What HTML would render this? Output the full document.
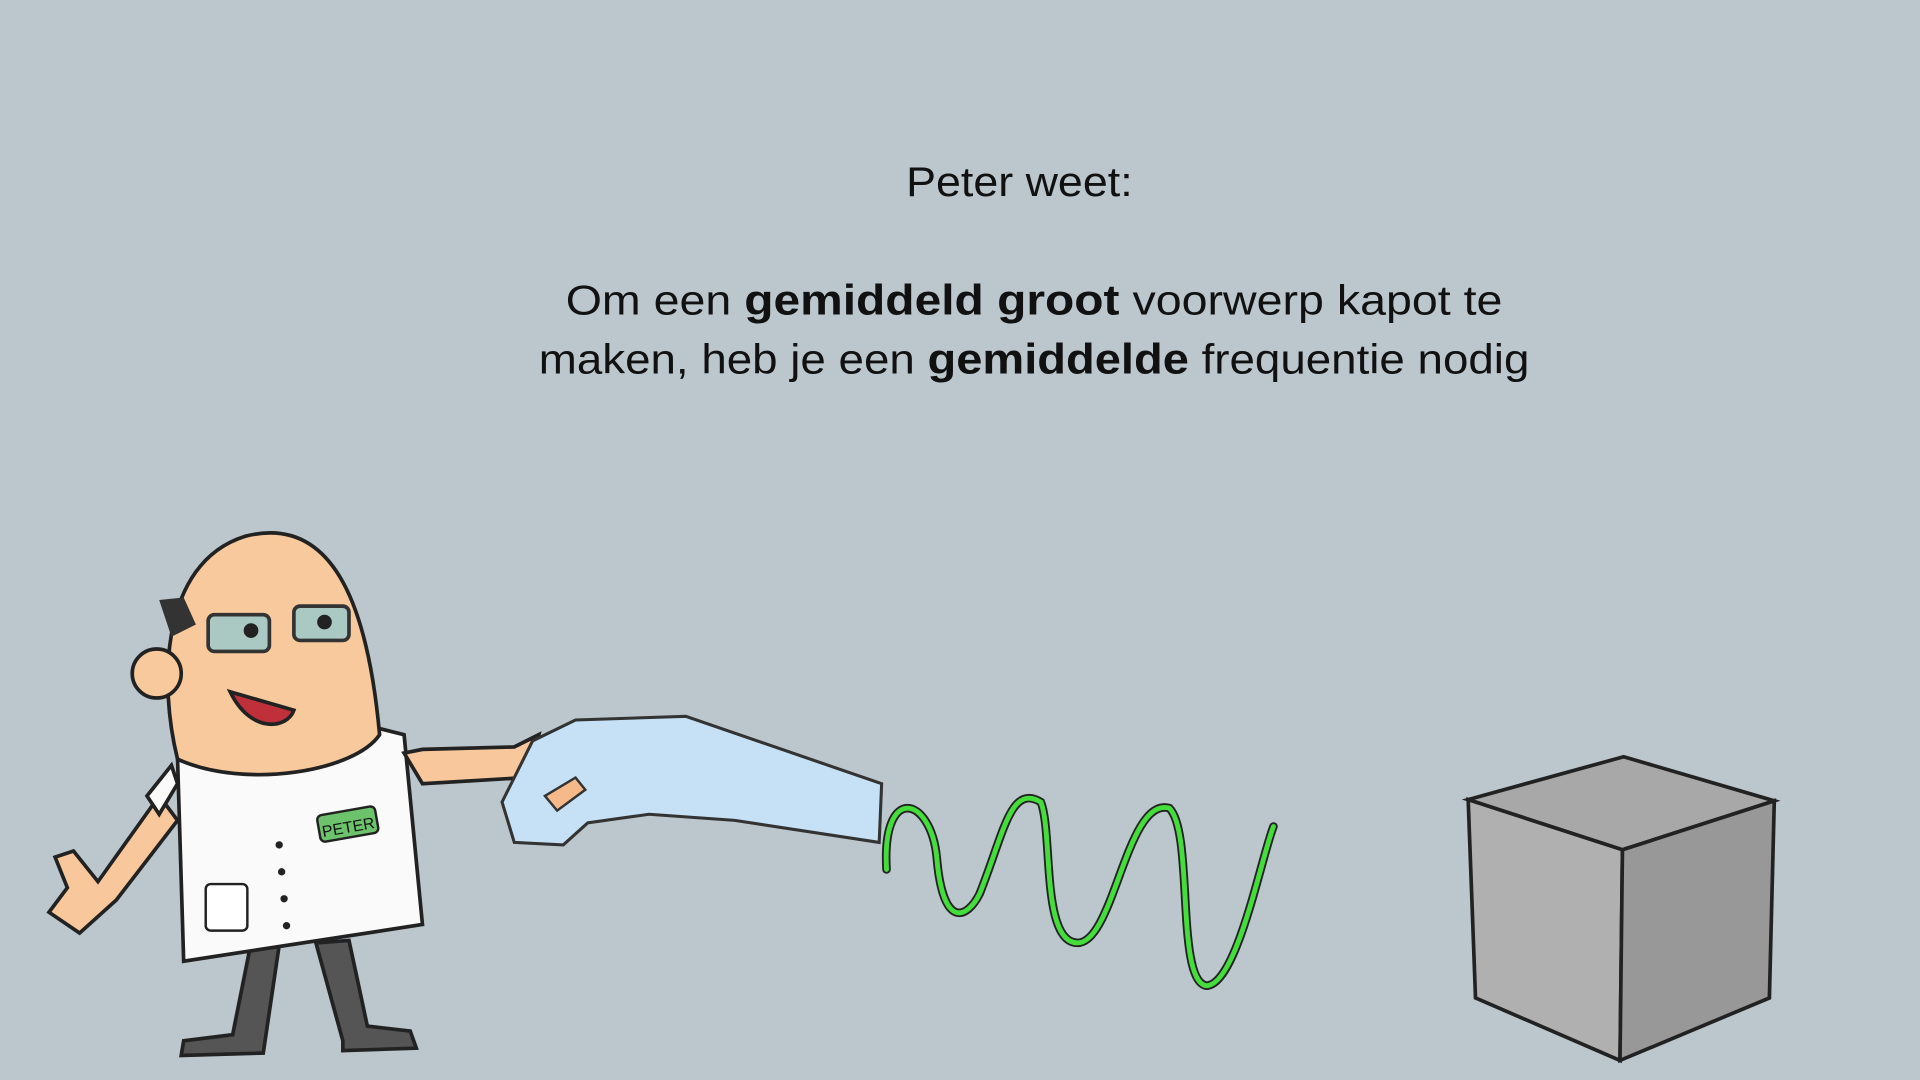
<!DOCTYPE html>
<html><head><meta charset="utf-8"><style>
html,body{margin:0;padding:0;background:#bbc6cd;width:1920px;height:1080px;overflow:hidden}
svg{display:block}
</style></head><body>
<svg width="1920" height="1080" viewBox="0 0 1568 882" xmlns="http://www.w3.org/2000/svg">
<rect width="1568" height="882" fill="#bbc6cd"/>
<g font-family="Liberation Sans, sans-serif" fill="#111" font-size="34">
<text x="740" y="160" textLength="185" lengthAdjust="spacingAndGlyphs">Peter weet:</text>
<text x="462" y="257" textLength="765" lengthAdjust="spacingAndGlyphs">Om een <tspan font-weight="bold" font-size="35">gemiddeld groot</tspan> voorwerp kapot te</text>
<text x="440" y="305" textLength="809" lengthAdjust="spacingAndGlyphs">maken, heb je een <tspan font-weight="bold" font-size="35">gemiddelde</tspan> frequentie nodig</text>
</g>
<!-- legs -->
<path d="M205 770 L190 845 L150 850 L148 862 L215 860 L228 772 Z" fill="#555" stroke="#222" stroke-width="3"/>
<path d="M258 770 L280 850 L280 858 L340 856 L335 842 L300 838 L285 768 Z" fill="#555" stroke="#222" stroke-width="3"/>
<!-- left arm -->
<path d="M130 650 L80 720 L60 695 L45 700 L55 725 L40 745 L65 762 L95 735 L145 670 Z" fill="#f8c79b" stroke="#222" stroke-width="3"/>
<!-- coat -->
<path d="M145 620 L150 785 L345 755 L330 600 L290 590 L200 600 Z" fill="#fafafa" stroke="#222" stroke-width="3"/>
<path d="M120 650 L130 665 L145 640 L140 625 Z" fill="#fafafa" stroke="#222" stroke-width="3"/>
<!-- right arm -->
<path d="M330 615 L345 640 L430 635 L440 600 L420 610 L345 612 Z" fill="#f8c79b" stroke="#222" stroke-width="3"/>
<rect x="260" y="662" width="48" height="22" rx="4" fill="#6cc36c" stroke="#222" stroke-width="2" transform="rotate(-10 284 673)"/>
<text x="284" y="680" font-size="13" font-family="Liberation Sans, sans-serif" text-anchor="middle" transform="rotate(-10 284 673)" fill="#111">PETER</text>
<rect x="168" y="722" width="34" height="38" rx="4" fill="#fff" stroke="#222" stroke-width="2"/>
<g fill="#222"><circle cx="228" cy="690" r="3"/><circle cx="230" cy="712" r="3"/><circle cx="232" cy="734" r="3"/><circle cx="234" cy="756" r="3"/></g>
<!-- head -->
<path d="M145 620 C130 560 130 460 200 438 C270 420 300 490 310 600 C290 630 200 645 145 620 Z" fill="#f8c99c" stroke="#222" stroke-width="3"/>
<ellipse cx="128" cy="550" rx="20" ry="20" fill="#f8c99c" stroke="#222" stroke-width="3"/>
<path d="M130 490 L140 520 L160 510 L150 488 Z" fill="#333"/>
<rect x="170" y="502" width="50" height="30" rx="5" fill="#a9c9c2" stroke="#333" stroke-width="3"/>
<rect x="240" y="495" width="45" height="28" rx="5" fill="#a9c9c2" stroke="#333" stroke-width="3"/>
<circle cx="205" cy="515" r="6" fill="#222"/><circle cx="265" cy="508" r="6" fill="#222"/>
<path d="M188 565 C205 600 235 595 240 580 Z" fill="#c0303a" stroke="#222" stroke-width="3"/>
<!-- gun -->
<path d="M410 655 L435 605 L470 588 L560 585 L720 640 L718 688 L600 670 L530 665 L480 672 L460 690 L420 688 Z" fill="#c6e1f5" stroke="#333" stroke-width="2.5"/>
<path d="M445 650 L470 635 L478 645 L455 662 Z" fill="#f5b98a" stroke="#333" stroke-width="2"/>
<!-- wave -->
<path d="M724 710 C720 640 760 650 765 700 C770 760 790 750 800 730 C820 680 825 640 850 655 C860 680 850 770 880 770 C910 770 920 650 955 660 C975 680 960 800 985 805 C1010 805 1030 700 1040 675" fill="none" stroke="#222" stroke-width="7" stroke-linecap="round"/>
<path d="M724 710 C720 640 760 650 765 700 C770 760 790 750 800 730 C820 680 825 640 850 655 C860 680 850 770 880 770 C910 770 920 650 955 660 C975 680 960 800 985 805 C1010 805 1030 700 1040 675" fill="none" stroke="#44dd3c" stroke-width="4" stroke-linecap="round"/>
<!-- cube -->
<polygon points="1199,653 1326,618 1449,654 1325,694" fill="#a8a8a8" stroke="#222" stroke-width="3"/>
<polygon points="1199,653 1325,694 1323,866 1205,815" fill="#b0b0b0" stroke="#222" stroke-width="3"/>
<polygon points="1325,694 1449,654 1445,815 1323,866" fill="#989898" stroke="#222" stroke-width="3"/>
</svg>
</body></html>
